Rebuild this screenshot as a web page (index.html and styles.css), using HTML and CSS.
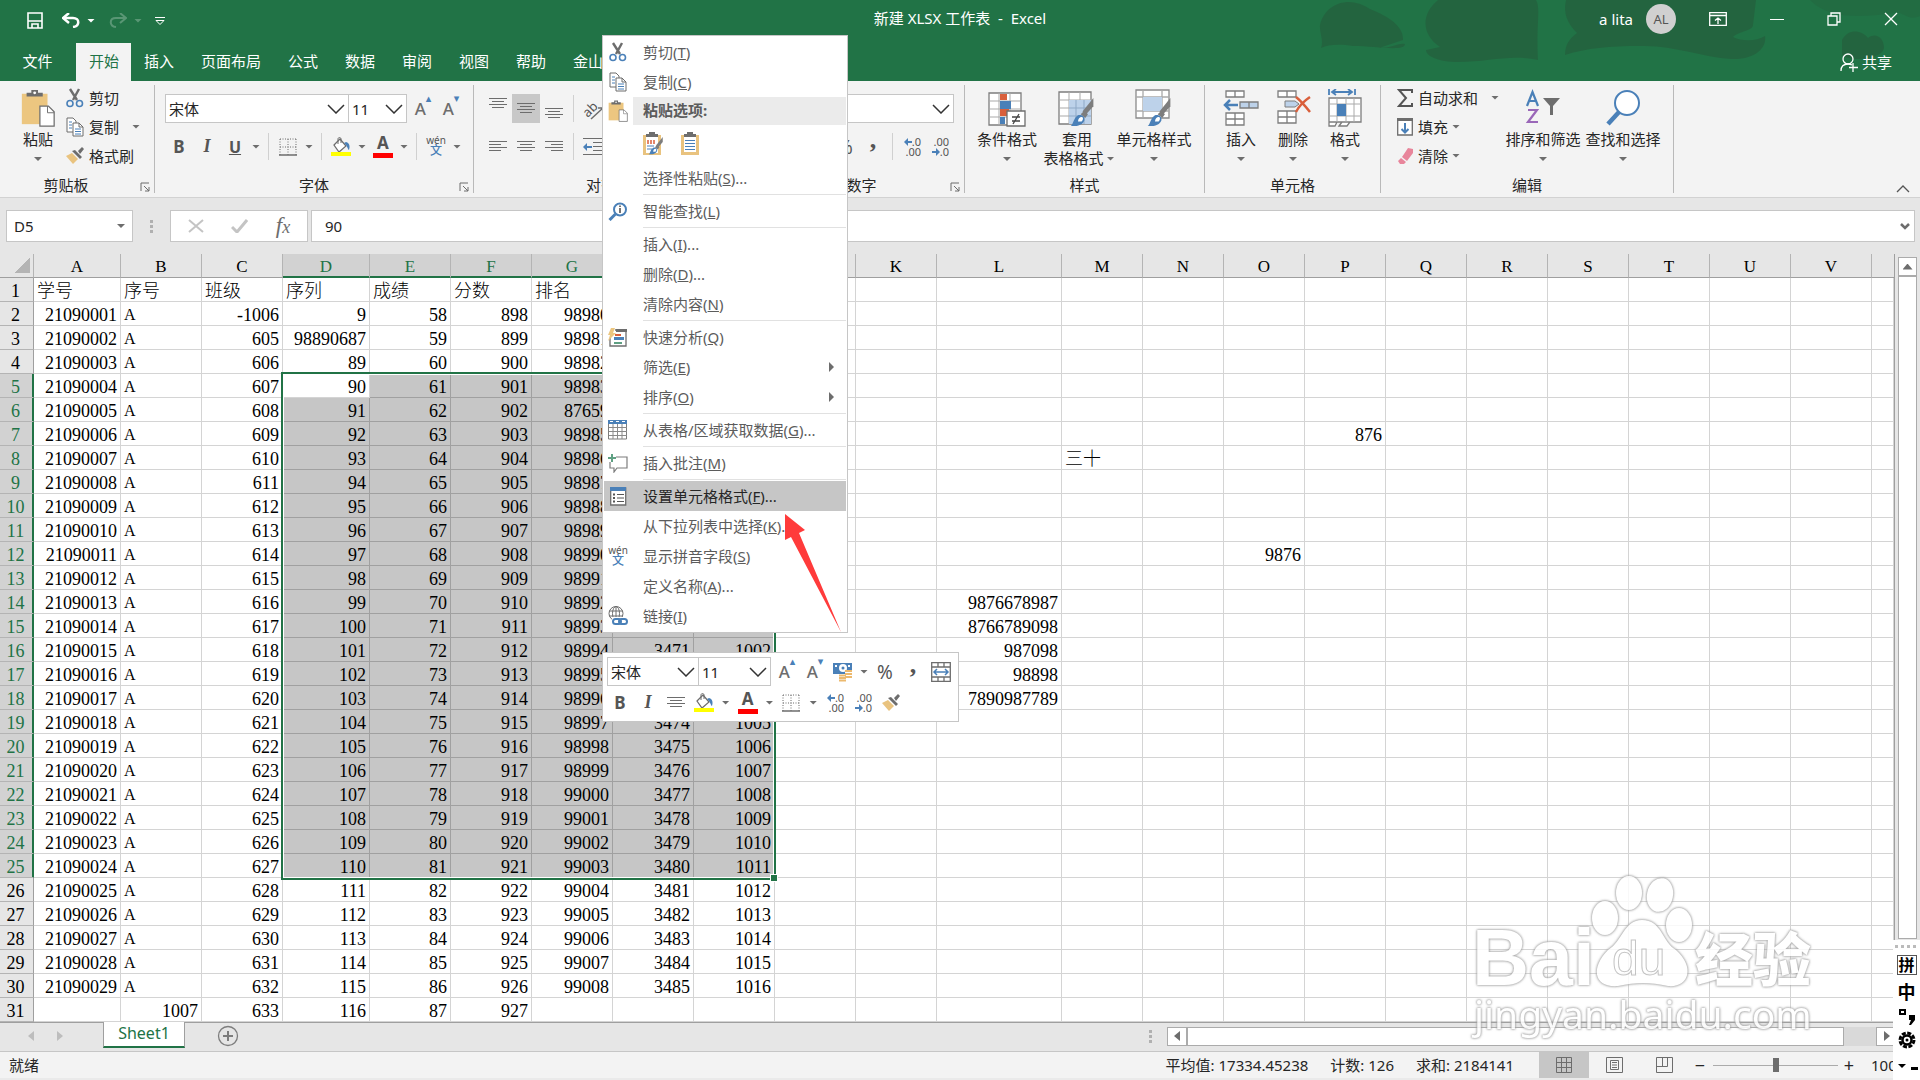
FILE: index.html
```html
<!DOCTYPE html>
<html lang="zh-CN">
<head>
<meta charset="utf-8">
<title>新建 XLSX 工作表 - Excel</title>
<link rel="stylesheet" href="styles.css">
</head>
<body>
<svg class="defs" aria-hidden="true">
  <symbol id="cut" viewBox="0 0 18 20"><path d="M4 1l7 11M13 1L7 12" stroke="#6d6d6d" stroke-width="2.4" fill="none"/><circle cx="4" cy="15.500" r="3" fill="none" stroke="#4a80b8" stroke-width="1.600"/><circle cx="13.500" cy="15.500" r="3" fill="none" stroke="#4a80b8" stroke-width="1.600"/></symbol>
  <symbol id="copy" viewBox="0 0 18 20"><path d="M1 1h6l3 3v11H1z" fill="#fff" stroke="#6d6d6d"/><path d="M7 6h6l4 4v9H7z" fill="#fff" stroke="#6d6d6d"/><path d="M13 6v4h4" fill="none" stroke="#6d6d6d"/><path d="M3 5h3M3 8h3M3 11h3M9 12h6M9 14.500h6M9 17h6" stroke="#4a80b8"/></symbol>
  <symbol id="brush" viewBox="0 0 18 18"><path d="M0 9l6-3 6 6-5 5z" fill="#e9c37f"/><path d="M6 4l3-1 7 7-2 2zM12 4l4-4 2 2-4 5z" fill="#6d6d6d"/></symbol>
  <symbol id="paste" viewBox="0 0 36 40"><rect x="1" y="5" width="27" height="32" fill="#ecc680"/><path d="M6 8V4h5V1h7v3h5v4z" fill="#6d6d6d"/><circle cx="14.500" cy="4" r="1.500" fill="#fff"/><path d="M20 18h9l6 6v15H20z" fill="#fff" stroke="#6d6d6d" stroke-width="1.300"/><path d="M28 18v7h7" fill="none" stroke="#6d6d6d"/></symbol>
  <symbol id="fill" viewBox="0 0 20 19"><path d="M3 8l6-6 6 7-7 6z" fill="#fff" stroke="#6d6d6d" stroke-width="1.200"/><path d="M7 7V2c0-2 3-2 3 0v4" fill="none" stroke="#6d6d6d"/><path d="M15 5c4 1 4 5 3 8-1 0-2-5-5-7z" fill="#4a80b8"/><path d="M0 15h20v4H0z" fill="#ff0"/></symbol>
  <symbol id="borders" viewBox="0 0 18 18"><path d="M1 1h16M1 9h16M1 1v16M9 1v16M17 1v16" fill="none" stroke="#6d6d6d" stroke-dasharray="1 1.500"/><path d="M0 17h18" stroke="#6d6d6d" stroke-width="1.500"/></symbol>
  <symbol id="lines-c" viewBox="0 0 18 12"><path d="M0 .5h18M3 3.500h12M0 6.500h18M3 9.500h12" stroke="#6d6d6d"/></symbol>
  <symbol id="lines-l" viewBox="0 0 18 12"><path d="M0 .5h18M0 3.500h12M0 6.500h18M0 9.500h12" stroke="#6d6d6d"/></symbol>
  <symbol id="lines-r" viewBox="0 0 18 12"><path d="M0 .5h18M6 3.500h12M0 6.500h18M6 9.500h12" stroke="#6d6d6d"/></symbol>
  <symbol id="indent" viewBox="0 0 20 18"><path d="M0 .5h20M10 4.500h10M10 8.500h10M10 12.500h10M0 16.500h20" stroke="#6d6d6d"/><path d="M0 9l4-4v3h5v2H4v3z" fill="#4a80b8"/></symbol>
  <symbol id="chev" viewBox="0 0 18 10"><path d="M1 1l8 8 8-8" fill="none" stroke="#333" stroke-width="1.500"/></symbol>
  <symbol id="launch" viewBox="0 0 10 10"><path d="M1 9V1h8M4 4l5 5M9 5v4H5" fill="none" stroke="#6d6d6d"/></symbol>
  <symbol id="grid" viewBox="0 0 36 36"><path d="M1 1h32v32H1z" fill="#fff" stroke="#7d7d7d" stroke-width="1.300"/><path d="M1 9h32M1 17h32M1 25h32M11 1v32M22 1v32" stroke="#a9a9a9"/></symbol>
  <symbol id="bigbrush" viewBox="0 0 26 32"><path d="M25 0v9l-8 9-4-3z" fill="#7d7d7d"/><path d="M15 14l4 4-3 4-5-4z" fill="#7d7d7d"/><path d="M0 31c3-2 3-9 8-12 5-1 8 2 7 6-3 6-9 6-15 6z" fill="#4a80b8"/><path d="M8 26c0-3 2-5 4-5s2 3 0 5z" fill="#fff"/></symbol>
  <symbol id="left-arrow" viewBox="0 0 8 8"><path d="M0 4l4-4v3h4v2H4v3z" fill="#4a80b8"/></symbol>
  <symbol id="right-arrow" viewBox="0 0 8 8"><path d="M8 4L4 0v3H0v2h4v3z" fill="#4a80b8"/></symbol>
</svg>

<div class="app">
  <header class="head">
    <svg class="art" viewBox="0 0 720 81" aria-hidden="true"><g fill="#24613e" opacity=".8"><path d="M120 25c5-22 30-30 50-16 20 8 34 18 33 31l-24 8c10 1 20-6 26-4 0 8-30 2-52 2-12-2-24-2-32 2 3-8-2-16-1-23z"/><path d="M238 0h98c5 8 0 24 2 60-28-6-48 2-80 2-20 0-32-6-32-12l14-3c-18-12-20-32-2-47z"/><path d="M366 0h190l-3 25c0 6-14 6-20 12 10 5 24 4 32-1 2 12-10 24-34 23-30-2-58-14-90-13-32 0-54 2-76 9 0-10 4-16 12-22-10-10-14-20-11-33z"/><path d="M642 40c6-12 20-10 26-2 8-6 16 0 16 10-2 12-34 14-42 7z"/><path d="M610 0h110v16c-12 6-18-6-26-3-40 6-68 4-84-13z" opacity=".5"/></g></svg>
    <div class="title-row">
      <div class="quick">
        <button aria-label="保存"><svg width="16" height="17" viewBox="0 0 16 17"><path d="M1 1h14v15H1z" fill="none" stroke="#fff" stroke-width="1.600"/><path d="M1 9h14M5 16v-4h6v4" fill="none" stroke="#fff" stroke-width="1.600"/></svg></button>
        <button aria-label="撤消"><svg width="18" height="15" viewBox="0 0 18 15"><path d="M2 5h9c7 0 7 8 0 9" fill="none" stroke="#fff" stroke-width="2.500"/><path d="M7 0L1 5l6 5" fill="none" stroke="#fff" stroke-width="2.500"/></svg><i class="caret light"></i></button>
        <button class="dim" aria-label="恢复"><svg width="18" height="15" viewBox="0 0 18 15"><path d="M16 5H7c-7 0-7 8 0 9" fill="none" stroke="#fff" stroke-width="2"/><path d="M11 0l6 5-6 5" fill="none" stroke="#fff" stroke-width="2"/></svg><i class="caret light"></i></button>
        <button aria-label="自定义快速访问工具栏"><svg width="10" height="8" viewBox="0 0 10 8"><path d="M0 .5h10M1 3.500l4 4 4-4z" fill="none" stroke="#fff"/></svg></button>
      </div>
      <div class="doc">新建 XLSX 工作表&nbsp; -&nbsp; Excel</div>
      <div class="account"><span>a lita</span><span class="avatar">AL</span>
        <button aria-label="功能区显示选项"><svg width="18" height="14" viewBox="0 0 18 14"><path d="M.7.7h16.600v12.600H.7zM1 3.500h16M9 12V6M6 8.500L9 6l3 2.500" fill="none" stroke="#fff" stroke-width="1.300"/></svg></button>
        <button aria-label="最小化"><svg width="14" height="14" viewBox="0 0 14 14"><path d="M0 7.500h14" stroke="#fff"/></svg></button>
        <button aria-label="还原"><svg width="14" height="14" viewBox="0 0 14 14"><path d="M1 4h9v9H1zM4 4V1h9v9h-3" fill="none" stroke="#fff" stroke-width="1.300"/></svg></button>
        <button aria-label="关闭"><svg width="14" height="14" viewBox="0 0 14 14"><path d="M1 1l12 12M13 1L1 13" stroke="#fff" stroke-width="1.300"/></svg></button>
      </div>
    </div>
    <nav class="tabs">
      <button class="file">文件</button><button class="on">开始</button><button>插入</button><button>页面布局</button><button>公式</button><button>数据</button><button>审阅</button><button>视图</button><button>帮助</button><button>金山</button>
      <button class="share"><svg width="18" height="19" viewBox="0 0 18 19"><circle cx="8" cy="6" r="5" fill="none" stroke="#fff" stroke-width="1.300"/><path d="M1 18c0-5 3-7 7-7 2 0 3 .5 4 1M13 10v9M9 14.500h9" fill="none" stroke="#fff" stroke-width="1.300"/></svg>共享</button>
    </nav>
  </header>

  <section class="ribbon">
    <div class="group clip">
      <div class="body">
        <button class="big"><svg width="36" height="40"><use href="#paste"/></svg>粘贴<i class="caret"></i></button>
        <div class="stack">
          <button><svg width="18" height="20"><use href="#cut"/></svg>剪切</button>
          <button><svg width="18" height="20"><use href="#copy"/></svg>复制<i class="caret far"></i></button>
          <button><svg width="18" height="18"><use href="#brush"/></svg>格式刷</button>
        </div>
      </div>
      <div class="foot">剪贴板<svg class="launch"><use href="#launch"/></svg></div>
    </div>
    <div class="group font">
      <div class="body rows">
        <div class="bar">
          <div class="combo name"><input aria-label="字体" value="宋体"><button aria-label="选择字体"><svg width="18" height="10"><use href="#chev"/></svg></button></div>
          <div class="combo size"><input aria-label="字号" value="11"><button aria-label="选择字号"><svg width="18" height="10"><use href="#chev"/></svg></button></div>
          <button class="tb grow-a">A<sup>▴</sup></button><button class="tb grow-a">A<sup>▾</sup></button>
        </div>
        <div class="bar">
          <button class="tb bold">B</button><button class="tb ital">I</button><button class="tb und">U</button><i class="caret"></i><i class="sep"></i>
          <button class="tb" aria-label="边框"><svg width="18" height="18"><use href="#borders"/></svg></button><i class="caret"></i><i class="sep"></i>
          <button class="tb" aria-label="填充颜色"><svg width="20" height="19"><use href="#fill"/></svg></button><i class="caret"></i>
          <button class="tb fcolor">A</button><i class="caret"></i><i class="sep"></i>
          <button class="tb wen"><span>wén</span><b>文</b></button><i class="caret"></i>
        </div>
      </div>
      <div class="foot">字体<svg class="launch"><use href="#launch"/></svg></div>
    </div>
    <div class="group align">
      <div class="body rows">
        <div class="bar"><button class="tb up" aria-label="顶端对齐"><svg width="18" height="12"><use href="#lines-c"/></svg></button><button class="tb sel" aria-label="垂直居中"><svg width="18" height="12"><use href="#lines-c"/></svg></button><button class="tb low" aria-label="底端对齐"><svg width="18" height="12"><use href="#lines-c"/></svg></button><i class="sep"></i><button class="tb orient" aria-label="方向"><span>ab</span><svg width="14" height="14" viewBox="0 0 14 14"><path d="M1 13L13 2M8 2h5v5" fill="none" stroke="#6d6d6d" stroke-width="1.500"/></svg></button></div>
        <div class="bar"><button class="tb" aria-label="左对齐"><svg width="18" height="12"><use href="#lines-l"/></svg></button><button class="tb" aria-label="居中"><svg width="18" height="12"><use href="#lines-c"/></svg></button><button class="tb" aria-label="右对齐"><svg width="18" height="12"><use href="#lines-r"/></svg></button><i class="sep"></i><button class="tb" aria-label="减少缩进量"><svg width="20" height="18"><use href="#indent"/></svg></button></div>
      </div>
      <div class="foot">对齐方式</div>
    </div>
    <div class="group number">
      <div class="body rows">
        <div class="combo"><input aria-label="数字格式" value="常规"><button aria-label="选择数字格式"><svg width="18" height="10"><use href="#chev"/></svg></button></div>
        <div class="bar"><button class="tb pct">%</button><button class="tb comma">,</button><i class="sep"></i><button class="tb dec"><span><svg width="8" height="8"><use href="#left-arrow"/></svg>.0</span><span>.00</span></button><button class="tb dec"><span>.00</span><span><svg width="8" height="8"><use href="#right-arrow"/></svg>.0</span></button></div>
      </div>
      <div class="foot">数字<svg class="launch"><use href="#launch"/></svg></div>
    </div>
    <div class="group styles">
      <div class="body">
        <button class="big"><svg width="38" height="38" viewBox="0 0 38 38"><svg y="3" width="36" height="36"><use href="#grid"/></svg><path d="M12 5h7v6h-7zM12 20h9v7h-9z" fill="#d95f3b"/><path d="M12 12h11v8H12zM12 28h5v7h-5z" fill="#4a80b8"/><path d="M19 22h18v15H19z" fill="#fff" stroke="#6d6d6d" stroke-width="1.300"/><path d="M24 28h8M24 32h8M31 25l-6 10" stroke="#444" stroke-width="1.300"/></svg>条件格式<i class="caret"></i></button>
        <button class="big"><svg width="38" height="38" viewBox="0 0 38 38"><svg y="2" width="36" height="36"><use href="#grid"/></svg><path d="M11 11h22v24H11z" fill="#bdd2ea"/><path d="M11 19h22M11 27h22M18 11v24M26 11v24" stroke="#8fa9c6"/><svg x="11" y="9" width="27" height="29"><use href="#bigbrush"/></svg></svg>套用<span class="two">表格格式<i class="caret"></i></span></button>
        <button class="big"><svg width="38" height="38" viewBox="0 0 38 38"><g fill="#fff" stroke="#8a8a8a" stroke-width="1.300"><path d="M1 1h33v28H1z"/><path d="M1 8h33M1 22h33M8 1v28M27 1v28" stroke="#aaa"/></g><path d="M8 8h19v14H8z" fill="#bdd2ea"/><svg x="11" y="9" width="27" height="29"><use href="#bigbrush"/></svg></svg>单元格样式<i class="caret"></i></button>
      </div>
      <div class="foot">样式</div>
    </div>
    <div class="group cells">
      <div class="body">
        <button class="big"><svg width="38" height="38" viewBox="0 0 38 38"><path d="M4 2h18v6H4zM13 2v6M4 24h18v12H4zM4 30h18M13 24v12" fill="#fff" stroke="#7d7d7d" stroke-width="1.300"/><path d="M18 13h18v6H18zM27 13v6" fill="#bdd2ea" stroke="#7d7d7d" stroke-width="1.300"/><path d="M16 16H3M8 11l-5 5 5 5" fill="none" stroke="#4a80b8" stroke-width="2.500"/></svg>插入<i class="caret"></i></button>
        <button class="big"><svg width="38" height="38" viewBox="0 0 38 38"><path d="M4 2h18v6H4zM13 2v6M4 22h18v12H4zM4 28h18M13 22v12" fill="#fff" stroke="#7d7d7d" stroke-width="1.300"/><path d="M11 12h10l4 3-4 3H11z" fill="#bdd2ea" stroke="#7d7d7d"/><path d="M22 8c5 4 10 10 14 15M36 8C30 12 25 17 22 23" fill="none" stroke="#d95f3b" stroke-width="2.500"/></svg>删除<i class="caret"></i></button>
        <button class="big"><svg width="38" height="38" viewBox="0 0 38 38"><path d="M3 9h32v24H3zM3 33h8l-2 4H3zM13 37l3-4h8l-3 4z" fill="#fff" stroke="#7d7d7d" stroke-width="1.300"/><path d="M3 15h32M3 27h32M11 9v24M20 9v24M28 9v24" stroke="#aaa"/><path d="M11 15h9v12h-9z" fill="#4a80b8"/><path d="M3 0v6M29 0v6M6 3h20M10 0L6 3l4 3M22 0l4 3-4 3" fill="none" stroke="#4a80b8" stroke-width="1.800"/></svg>格式<i class="caret"></i></button>
      </div>
      <div class="foot">单元格</div>
    </div>
    <div class="group edit">
      <div class="body">
        <div class="stack">
          <button><svg width="16" height="18" viewBox="0 0 16 18"><path d="M15 4V1H2l7 8-7 8h13v-3" fill="none" stroke="#555" stroke-width="2"/></svg>自动求和<i class="caret"></i></button>
          <button><svg width="16" height="18" viewBox="0 0 16 18"><path d="M.7 1h14.600v16H.7z" fill="#fff" stroke="#6d6d6d" stroke-width="1.300"/><path d="M0 0h16v3H0z" fill="#6d6d6d"/><path d="M8 5v10M4.500 11L8 14.500l3.500-3.500" fill="none" stroke="#4a80b8" stroke-width="2"/></svg>填充<i class="caret near"></i></button>
          <button><svg width="16" height="16" viewBox="0 0 16 16"><path d="M11 0l5 1v4l-6 8-5-4z M4 10l5 4-2 2-4 0-2-3z" fill="#e8859b"/></svg>清除<i class="caret near"></i></button>
        </div>
        <button class="big"><svg width="36" height="38" viewBox="0 0 36 38"><path d="M2 17L7.500 3 13 17M4 12h7" fill="none" stroke="#4a80b8" stroke-width="2.200"/><path d="M3 21h9L3 33h10" fill="none" stroke="#9a67b8" stroke-width="2.200"/><path d="M18 9h17l-7 8v9h-3v-9z" fill="#6d6d6d"/></svg>排序和筛选<i class="caret"></i></button>
        <button class="big"><svg width="36" height="38" viewBox="0 0 36 38"><circle cx="22" cy="14" r="12" fill="#fff" stroke="#4a80b8" stroke-width="2"/><path d="M14 23L3 35" stroke="#4a80b8" stroke-width="4.500"/></svg>查找和选择<i class="caret"></i></button>
      </div>
      <div class="foot">编辑</div>
    </div>
    <button class="collapse" aria-label="折叠功能区"><svg width="14" height="8" viewBox="0 0 14 8"><path d="M1 7l6-6 6 6" fill="none" stroke="#555" stroke-width="1.300"/></svg></button>
  </section>

  <section class="formula">
    <div class="namebox"><input aria-label="名称框" value="D5"><i class="caret"></i></div>
    <i class="dots"></i>
    <div class="fx"><button aria-label="取消"><svg width="16" height="14" viewBox="0 0 16 14"><path d="M1 1l14 12M15 1L1 13" stroke="#c4c4c4" stroke-width="2"/></svg></button><button aria-label="输入"><svg width="17" height="14" viewBox="0 0 17 14"><path d="M1 8l5 5L16 1" fill="none" stroke="#c4c4c4" stroke-width="3"/></svg></button><button class="fn" aria-label="插入函数">f<small>x</small></button></div>
    <div class="finput"><input aria-label="编辑栏" value="90"><svg width="10" height="7" viewBox="0 0 10 7"><path d="M1 1l4 4 4-4" fill="none" stroke="#6d6d6d" stroke-width="2.500"/></svg></div>
  </section>

  <main class="work">
    <div class="sheet">
      <table><colgroup id="cols"></colgroup><thead id="heads"></thead><tbody id="cells"></tbody></table>
      <i class="selection"></i>
    </div>
    <div class="vscroll"><button aria-label="向上滚动"><i class="tri up"></i></button><i class="thumb"></i></div>
  </main>

  <div class="sheets">
    <i class="tri left pale"></i><i class="tri right pale"></i>
    <button class="tab">Sheet1</button>
    <button class="add" aria-label="新工作表"><svg width="22" height="22" viewBox="0 0 22 22"><circle cx="11" cy="11" r="9.500" fill="none" stroke="#7d7d7d" stroke-width="1.300"/><path d="M11 6v10M6 11h10" stroke="#7d7d7d" stroke-width="2"/></svg></button>
    <i class="dots"></i>
    <div class="hscroll"><button aria-label="向左滚动"><i class="tri left"></i></button><i class="thumb"></i><button class="end" aria-label="向右滚动"><i class="tri right"></i></button></div>
  </div>

  <footer class="status">
    <span class="ready">就绪</span>
    <span>平均值: 17334.45238</span><span>计数: 126</span><span class="sum">求和: 2184141</span>
    <button class="view on" aria-label="普通"><svg width="16" height="16" viewBox="0 0 16 16"><path d="M.5.500h15v15H.5zM.5 5.500h15M.5 10.500h15M5.500.500v15M10.500.500v15" fill="none" stroke="#6d6d6d"/></svg></button>
    <button class="view" aria-label="页面布局"><svg width="17" height="16" viewBox="0 0 17 16"><path d="M.5.500h16v15H.5zM4.500 3.500h8v9h-8zM6 5.500h5M6 8h5M6 10.500h5" fill="none" stroke="#6d6d6d"/></svg></button>
    <button class="view" aria-label="分页预览"><svg width="17" height="16" viewBox="0 0 17 16"><path d="M.5.500h16v15H.5zM6.500.500v9M11.500.500v9M.5 9.500h11" fill="none" stroke="#6d6d6d"/></svg></button>
    <button class="zoom" aria-label="缩小">−</button><input type="range" aria-label="显示比例" min="0" max="100" value="50"><button class="zoom" aria-label="放大">+</button>
    <span class="pc">100%</span>
  </footer>
</div>

<svg class="mark" width="360" height="180" viewBox="0 0 360 180" aria-hidden="true">
  <g class="glow"><text x="4" y="113" class="bai">Bai</text><text x="227" y="109" class="jy">经验</text><text x="6" y="157" class="url">jingyan.baidu.com</text>
  <ellipse cx="137" cy="46" rx="13" ry="17"/><ellipse cx="161" cy="21" rx="13" ry="17"/><ellipse cx="192" cy="23" rx="13" ry="17" transform="rotate(12 192 23)"/><ellipse cx="211" cy="53" rx="13" ry="17"/>
  <path d="M174 48c20 0 20 22 34 30 20 18 12 38-8 36-18-4-32-4-50 0-24 2-28-18-10-36 14-8 16-30 34-30z"/><text x="144" y="103" class="du">du</text></g>
</svg>

<aside class="ime"><i class="grip"></i><button class="pin">拼</button><button>中</button><button class="punct" aria-label="中文标点"><svg width="18" height="18" viewBox="0 0 18 18"><path d="M2 3h5v4H2z" fill="none" stroke="#000" stroke-width="2"/><path d="M11 8h6v5l-4 5h-2l2-5h-2z"/></svg></button><button aria-label="设置"><svg width="18" height="18" viewBox="0 0 18 18"><circle cx="9" cy="9" r="7" fill="none" stroke="#000" stroke-width="3" stroke-dasharray="4 1.500"/><circle cx="9" cy="9" r="4.500" fill="none" stroke="#000" stroke-width="2.500"/><circle cx="9" cy="9" r="1.500"/></svg></button><div class="imeb"><i class="caret"></i><span></span></div></aside>

<div class="menu" role="menu">
  <button><svg width="18" height="20"><use href="#cut"/></svg>剪切(<u>T</u>)</button>
  <button><svg width="18" height="20"><use href="#copy"/></svg>复制(<u>C</u>)</button>
  <div class="cap"><svg width="20" height="22"><use href="#paste"/></svg><b>粘贴选项:</b></div>
  <div class="opts">
    <button aria-label="保留源格式"><svg width="22" height="24" viewBox="0 0 22 24"><path d="M0 3h18v20H0z" fill="#e9c37f"/><path d="M3 5h12v16H3z" fill="#fff"/><path d="M3 5V2h3V0h6v2h3v3z" fill="#6d6d6d"/><path d="M4 9h9M4 11h9" stroke="#d95f3b" stroke-width="1.500" stroke-dasharray="2 1"/><path d="M4 14h7M4 17h5" stroke="#4a80b8"/><svg x="4" y="5" width="18" height="18"><use href="#bigbrush"/></svg></svg></button>
    <button aria-label="粘贴"><svg width="18" height="24" viewBox="0 0 18 24"><path d="M0 3h18v20H0z" fill="#e9c37f"/><path d="M3 5h12v15H3z" fill="#fff"/><path d="M3 5V2h3V0h6v2h3v3z" fill="#6d6d6d"/><path d="M4 8.500h10M4 11.500h10M4 14.500h10M4 17.500h10" stroke="#4a80b8"/></svg></button>
  </div>
  <button>选择性粘贴(<u>S</u>)...</button><hr>
  <button><svg width="19" height="19" viewBox="0 0 19 19"><circle cx="11.500" cy="7.500" r="6" fill="#fff" stroke="#4a80b8" stroke-width="2"/><path d="M7 12l-6 6" stroke="#4a80b8" stroke-width="3"/><path d="M11.500 6v5M11.500 3.500v1.500" stroke="#444" stroke-width="1.500"/></svg>智能查找(<u>L</u>)</button><hr>
  <button>插入(<u>I</u>)...</button><button>删除(<u>D</u>)...</button><button>清除内容(<u>N</u>)</button><hr>
  <button><svg width="20" height="19" viewBox="0 0 20 19"><path d="M2 10v8h16V2H7" fill="#fff" stroke="#6d6d6d" stroke-width="1.300"/><path d="M8 1h11v3H8z" fill="#6d6d6d"/><path d="M3 0h4L5 5h3L0 13l2-6H0z" fill="#ecc680"/><path d="M7 6h6v2H7z" fill="#d95f3b"/><path d="M6 9h10v3H6z" fill="#4a80b8"/><path d="M6 14h8v2H6z" fill="#5fa083"/></svg>快速分析(<u>Q</u>)</button>
  <button>筛选(<u>E</u>)<i class="tri right"></i></button><button>排序(<u>O</u>)<i class="tri right"></i></button><hr>
  <button><svg width="20" height="20" viewBox="0 0 20 20"><path d="M.5 3h18v16H.5z" fill="#fff" stroke="#7d7d7d"/><path d="M1 7.500h18M1 11.500h18M1 15.500h18M5 4v15M9.500 4v15M14 4v15" stroke="#8a8a8a"/><path d="M0 0h19v4H0z" fill="#4a80b8"/><path d="M2 1.500h3M8 1.500h3M14 1.500h3" stroke="#fff"/></svg>从表格/区域获取数据(<u>G</u>)...</button><hr>
  <button><svg width="20" height="19" viewBox="0 0 20 19"><path d="M8 3h11v11H9l-3 4v-4H2V8" fill="#fff" stroke="#7d7d7d" stroke-width="1.200"/><path d="M4 0v8M0 4h8" stroke="#5fa083" stroke-width="2"/></svg>插入批注(<u>M</u>)</button><hr>
  <button class="hot"><svg width="18" height="19" viewBox="0 0 18 19"><path d="M1.700 1h15v17h-15z" fill="#fff" stroke="#6d6d6d" stroke-width="1.300"/><path d="M1 0h16v4H1z" fill="#4a80b8"/><path d="M8 7.500h7M8 11h7M8 14.500h7" stroke="#555"/><path d="M4 7.500h2M4 11h2M4 14.500h2" stroke="#555" stroke-width="2"/></svg>设置单元格格式(<u>F</u>)...</button>
  <button>从下拉列表中选择(<u>K</u>)...</button>
  <button><span class="wen"><span>wén</span><b>文</b></span>显示拼音字段(<u>S</u>)</button>
  <button>定义名称(<u>A</u>)...</button>
  <button><svg width="20" height="20" viewBox="0 0 20 20"><circle cx="8" cy="7.500" r="7" fill="#fff" stroke="#6d6d6d"/><path d="M1 5h14M1 10h14M8 .500v14" stroke="#6d6d6d"/><ellipse cx="8" cy="7.500" rx="3.500" ry="7" fill="none" stroke="#6d6d6d"/><path d="M4 11h16v9H4z" fill="#fff"/><rect x="5" y="13" width="8" height="5" rx="2.500" fill="none" stroke="#4a80b8" stroke-width="2"/><rect x="11" y="13" width="8" height="5" rx="2.500" fill="none" stroke="#4a80b8" stroke-width="2"/></svg>链接(<u>I</u>)</button>
</div>

<div class="mini">
  <div class="bar">
    <div class="combo name"><input aria-label="字体" value="宋体"><button aria-label="选择字体"><svg width="18" height="10"><use href="#chev"/></svg></button></div>
    <div class="combo size"><input aria-label="字号" value="11"><button aria-label="选择字号"><svg width="18" height="10"><use href="#chev"/></svg></button></div>
    <button class="tb grow-a">A<sup>▴</sup></button><button class="tb grow-a">A<sup>▾</sup></button>
    <button class="tb" aria-label="会计数字格式"><svg width="20" height="20" viewBox="0 0 20 20"><path d="M0 1h19v11H0z" fill="#4a80b8"/><circle cx="10" cy="6" r="4" fill="#fff"/><circle cx="10" cy="6" r="1.500" fill="#4a80b8"/><path d="M2 3h2v2H2zM15 3h2v2h-2z" fill="#fff"/><path d="M12 8h7v9h-7zM6 13h7v6H6z" fill="#fff"/><path d="M12 9h7M12 12h7M12 15h7M6 13.500h7M6 16h7M6 18.500h7" stroke="#ecb96e" stroke-width="1.800"/></svg></button><i class="caret"></i>
    <button class="tb pct">%</button><button class="tb comma">,</button>
    <button class="tb" aria-label="合并后居中"><svg width="20" height="20" viewBox="0 0 20 20"><path d="M.7.700h18.600v18.600H.7zM.7 5h18.600M.7 15h18.600M7 .700V5M13 .700V5M7 15v4M13 15v4" fill="#fff" stroke="#6d6d6d" stroke-width="1.300"/><path d="M3 10h14M6 7l-3 3 3 3M14 7l3 3-3 3" fill="none" stroke="#4a80b8" stroke-width="1.500"/></svg></button>
  </div>
  <div class="bar">
    <button class="tb bold">B</button><button class="tb ital">I</button><button class="tb" aria-label="居中"><svg width="18" height="12"><use href="#lines-c"/></svg></button>
    <button class="tb" aria-label="填充颜色"><svg width="20" height="19"><use href="#fill"/></svg></button><i class="caret"></i>
    <button class="tb fcolor">A</button><i class="caret"></i>
    <button class="tb" aria-label="边框"><svg width="18" height="18"><use href="#borders"/></svg></button><i class="caret"></i>
    <button class="tb dec"><span><svg width="8" height="8"><use href="#left-arrow"/></svg>.0</span><span>.00</span></button><button class="tb dec"><span>.00</span><span><svg width="8" height="8"><use href="#right-arrow"/></svg>.0</span></button>
    <button class="tb" aria-label="格式刷"><svg width="18" height="18"><use href="#brush"/></svg></button>
  </div>
</div>

<svg class="pointer" width="60" height="120" viewBox="0 0 60 120" aria-hidden="true"><path d="M0 0l20 16-6 3 42 99L6 23l-6 3z" fill="#ff3b3b"/></svg>
<script src="sheet.js"></script>
</body>
</html>
```
FILE: styles.css
```css
* { box-sizing: border-box; }
body { margin: 0; overflow: hidden; font: 15px/20px "Noto Sans", "Noto Sans CJK SC", sans-serif; color: #262626; }
button, input { font: inherit; color: inherit; border: 0; background: none; padding: 0; margin: 0; min-width: 0; }
button { white-space: nowrap; }
svg { flex: none; display: block; }
i { display: block; flex: none; }
.defs { position: absolute; width: 0; height: 0; }
.app { min-height: 100vh; display: flex; flex-direction: column; background: #e6e6e6; }
.caret { width: 14px; height: 4px; background: #6d6d6d; clip-path: polygon(3px 0, 11px 0, 7px 4px); }
.caret.light { background: #fff; width: 8px; clip-path: polygon(0 0, 8px 0, 4px 4px); }

.head { position: relative; height: 81px; background: #217346; color: #fff; }
.art { position: absolute; right: 0; top: 0; width: 720px; height: 81px; }
.title-row { position: relative; height: 43px; display: grid; grid-template-columns: 1fr auto 1fr; align-items: start; }
.quick { display: flex; align-items: center; gap: 14px; padding: 12px 0 0 27px; height: 29px; }
.quick button { display: flex; align-items: center; gap: 7px; }
.quick button:nth-child(2) { margin-left: 5px; }
.quick button:nth-child(4) { margin-left: -1px; }
.dim { opacity: .25; }
.doc { padding-top: 8px; }
.account { display: flex; align-items: center; justify-content: flex-end; padding: 4px 22px 0 0; height: 34px; }
.avatar { width: 30px; height: 30px; border-radius: 50%; background: #d0d0d0; color: #555; font-size: 13px; line-height: 30px; text-align: center; margin-left: 13px; }
.account button { margin-left: 43px; }
.account .avatar + button { margin-left: 33px; }
.tabs { position: relative; display: flex; height: 38px; }
.tabs button { padding: 0 14px 3px 13px; }
.tabs .file { width: 76px; }
.tabs .on { background: #f3f3f3; color: #217346; width: 55px; }
.tabs .share { margin-left: auto; display: flex; align-items: center; gap: 4px; padding: 0 28px 0 0; }

.ribbon { display: flex; height: 117px; background: #f3f3f3; border-bottom: 1px solid #d2d2d2; padding-top: 4px; }
.group { display: flex; flex-direction: column; border-right: 1px solid #b9b9b9; height: 108px; }
.body { display: flex; height: 91px; }
.foot { height: 17px; line-height: 17px; text-align: center; position: relative; padding-top: 1px; }
.launch { position: absolute; right: 4px; bottom: 1px; width: 10px; height: 10px; }
.clip { width: 155px; }
.clip .foot { padding-right: 22px; }
.clip .big { padding-left: 16px; width: 60px; }
.font { width: 319px; } .align { width: 285px; } .number { width: 206px; } .styles { width: 240px; } .cells { width: 176px; } .edit { width: 293px; }
.big { display: flex; flex-direction: column; align-items: center; line-height: 19px; padding-top: 4px; }
.big > svg { margin-bottom: 3px; height: 38px; }
.big > .caret { margin-top: 8px; }
.two { display: flex; align-items: center; margin-left: 7px; }
.stack { display: flex; flex-direction: column; margin-left: 6px; margin-top: -2px; }
.stack button { height: 29px; display: flex; align-items: center; gap: 5px; }
.stack .far { margin-left: 5px; }
.edit .stack .caret { margin-left: 5px; } .edit .stack .near { margin-left: -4px; }
.edit .stack { margin-left: 16px; width: 106px; }
.edit .big { width: 80px; }
.styles .body { padding-left: 2px; } .styles .big { width: 80px; } .styles .big:nth-child(2) { width: 60px; } .styles .big:nth-child(3) { width: 94px; }
.cells .body { padding-left: 10px; } .cells .big { width: 52px; }
.rows { flex-direction: column; padding: 9px 10px 0; gap: 9px; }
.bar { display: flex; align-items: center; height: 29px; }
.combo { display: flex; flex: none; height: 29px; background: #fff; border: 1px solid #c6c6c6; padding: 0 3px; align-items: center; justify-content: space-between; }
.combo input { width: 60%; }
.combo.name { width: 184px; } .combo.size { width: 59px; margin-left: -1px; margin-right: 2px; }
.combo.size input { width: 22px; }
.font .rows { padding-right: 0; }
.tb { width: 28px; height: 29px; display: flex; align-items: center; justify-content: center; color: #555; flex: none; }
.sep { width: 1px; height: 27px; background: #d0d0d0; margin: 0 5px; }
.bold { font-weight: 700; font-size: 17px; }
.ital { font: italic 700 18px "Liberation Serif", serif; }
.und { font-weight: 700; text-decoration: underline; font-size: 16px; }
.grow-a { font-size: 17px; color: #6d6d6d; font-weight: 500; }
.grow-a sup { font: 11px/10px "DejaVu Sans", sans-serif; color: #4a80b8; align-self: flex-start; }
.fcolor { font-weight: 700; font-size: 17px; background: linear-gradient(#f00, #f00) center 21px / 20px 5px no-repeat; padding-bottom: 8px; }
.wen { width: 20px; display: flex; flex-direction: column; align-items: center; justify-content: center; font-size: 10px; line-height: 9px; color: #555; }
.wen b { font-weight: 500; font-size: 12px; line-height: 12px; color: #4a80b8; }
.tb.wen { width: 28px; }
.up { padding-bottom: 10px; } .low { padding-top: 10px; } .sel { background: #c8c8c8; }
.orient span { transform: rotate(-45deg); font-size: 13px; } .orient svg { margin: 8px 0 0 -8px; }
.pct { font-size: 19px; } .comma { font: 700 26px/20px "Liberation Serif", serif; padding-bottom: 14px; }
.dec { flex-direction: column; font-size: 11px; line-height: 9px; align-items: center; gap: 1px; }
.dec span { display: flex; justify-content: flex-end; width: 18px; align-items: center; }
.number .bar { justify-content: flex-end; }
.collapse { margin: auto 10px 4px auto; }

.formula { height: 56px; padding: 12px 5px 12px 6px; display: flex; align-items: center; }
.formula > div { background: #fff; border: 1px solid #c6c6c6; height: 32px; display: flex; align-items: center; }
.namebox { width: 127px; padding: 0 4px 0 7px; justify-content: space-between; }
.namebox input { width: 80px; }
.dots { width: 3px; height: 13px; margin: 0 17px; background: repeating-linear-gradient(#b0b0b0 0 3px, transparent 3px 5px); }
.fx { width: 138px; justify-content: space-around; padding: 0 3px; }
.fn { font: italic 23px/24px "Liberation Serif", serif; color: #6d6d6d; } .fn small { font-size: 18px; }
.finput { flex: 1; margin-left: 3px; padding: 0 4px 0 13px; }
.finput input { flex: 1; }

.work { display: flex; flex: 1; min-height: 0; }
.sheet { position: relative; flex: 1; background: #fff; border-right: 1px solid #9f9f9f; }
table { width: 100%; table-layout: fixed; border-collapse: separate; border-spacing: 0; font: 18px/20px "Liberation Serif", "Noto Sans CJK SC", serif; color: #000; }
tr { height: 24px; }
td, th { height: 24px; padding: 3px 3px 0; overflow: hidden; white-space: nowrap; font-weight: 400; border-right: 1px solid #d4d4d4; border-bottom: 1px solid #d4d4d4; text-align: right; line-height: 20px; }
th { background: #e6e6e6; text-align: center; border-color: #b4b4b4; }
thead th { border-bottom-color: #9f9f9f; font-size: 17px; }
tbody th { border-right-color: #9f9f9f; padding-right: 8px; padding-left: 6px; }
thead th:last-child { border-right: 0; }
thead th:first-child { background: linear-gradient(135deg, transparent 50%, #b4b4b4 50%) 15px 4px / 15px 15px no-repeat #e6e6e6; }
th.s { background: #d2d2d2; color: #217346; }
thead th.s { box-shadow: inset 0 -1px #217346; border-bottom-color: #217346; }
tbody th.s { box-shadow: inset -1px 0 #217346; border-right-color: #217346; }
td.l { text-align: left; font-weight: 300; }
td.letter { font-size: 16px; }
td.s { background: #c6c6c6; border-color: #a0a0a0; }
.selection { position: absolute; left: 281px; top: 118px; width: 495px; height: 508px; border: 2px solid #217346; box-shadow: inset 0 0 0 1px #fff; }
.selection::after { content: ""; position: absolute; right: -4px; bottom: -4px; width: 6px; height: 6px; background: #217346; border: 1px solid #fff; }
.tri { width: 6px; height: 10px; background: #6d6d6d; }
.tri.left { clip-path: polygon(6px 0, 6px 10px, 0 5px); }
.tri.right { clip-path: polygon(0 0, 0 10px, 6px 5px); }
.tri.up { width: 10px; height: 6px; clip-path: polygon(0 6px, 10px 6px, 5px 0); padding: 0; }
.pale { background: #bdbdbd; }
.vscroll { width: 25px; padding: 3px 3px 83px; display: flex; flex-direction: column; }
.vscroll button, .vscroll .thumb { width: 19px; background: #fff; border: 1px solid #ababab; }
.vscroll button { height: 19px; display: grid; place-items: center; flex: none; }
.vscroll .thumb { flex: 1; }

.sheets { height: 29px; border-top: 1px solid #9f9f9f; display: flex; align-items: center; padding: 0 0 2px 28px; }
.sheets > .tri + .tri { margin-left: 23px; }
.tab { width: 82px; height: 27px; margin: -3px 0 0 40px; padding-bottom: 2px; background: #fff; border: solid #9f9f9f; border-width: 0 1px; border-bottom: 2px solid #217346; color: #217346; font-size: 16px; }
.add { margin-left: 32px; }
.sheets .dots { margin-left: auto; margin-right: 15px; }
.hscroll { display: flex; width: 753px; height: 19px; background: #d9d9d9; }
.hscroll button, .hscroll .thumb { background: #fff; border: 1px solid #ababab; }
.hscroll button { width: 20px; display: grid; place-items: center; }
.hscroll .thumb { width: 657px; }
.hscroll .end { margin-left: auto; width: 44px; justify-content: start; padding-left: 7px; }

.status { height: 29px; border-top: 1px solid #c6c6c6; border-bottom: 2px solid #eaeaea; background: #f3f3f3; display: flex; align-items: center; padding-left: 9px; }
.ready { margin-right: auto; }
.status > span + span { margin-left: 22px; }
.status .sum { margin-right: 25px; }
.view { width: 50px; height: 26px; display: grid; place-items: center; }
.view.on { background: #c6c6c6; }
.zoom { width: 16px; font-size: 18px; margin: 0 0 0 3px; }
.status input { appearance: none; width: 125px; height: 14px; margin: 0 0 0 5px; background: linear-gradient(#ababab, #ababab) center / 100% 1px no-repeat; }
.status input::-webkit-slider-thumb { appearance: none; width: 6px; height: 14px; background: #6d6d6d; }
.status > span.pc { width: 49px; margin-left: 14px; }

.menu { position: absolute; left: 602px; top: 35px; width: 246px; background: #fff; border: 1px solid #c6c6c6; padding: 1px; color: #5c5c5c; }
.menu > button { display: flex; align-items: center; width: 100%; height: 30px; padding-left: 39px; }
.menu > button > svg, .menu > button > .wen { margin-left: -35px; margin-right: 15px; width: 20px; }
.menu .tri { margin-left: auto; margin-right: 12px; width: 5px; height: 10px; clip-path: polygon(0 0, 0 10px, 5px 5px); }
.menu .hot { background: #c6c6c6; color: #262626; }
.menu hr { margin: 0 0 0 39px; border: 0; height: 3px; background: linear-gradient(#e1e1e1, #e1e1e1) 0 1px / 100% 1px no-repeat; }
.cap { display: flex; align-items: center; height: 28px; padding-left: 4px; }
.cap b { margin-left: 5px; flex: 1; background: #ebebeb; padding-left: 10px; height: 28px; line-height: 26px; }
.opts { display: flex; gap: 16px; padding-left: 39px; height: 38px; align-items: center; }

.mini { position: absolute; left: 602px; top: 652px; width: 357px; height: 70px; background: #fff; border: 1px solid #c6c6c6; padding: 3px 4px; }
.mini .bar { height: 31px; }
.mini .name { width: 92px; } .mini .size { width: 73px; }
.mini .bar:last-child { justify-content: space-between; padding-right: 50px; }
.mini .bar:last-child .tb { width: 26px; }
.pointer { position: absolute; left: 785px; top: 514px; }

.mark { position: absolute; right: 92px; bottom: 28px; overflow: visible; opacity: .85; }
.glow { fill: #fff; filter: drop-shadow(0 0 1px #999) drop-shadow(0 0 1px #aaa); }
.bai { font: 700 79px "Liberation Sans", sans-serif; }
.jy { font: 900 58px "Noto Sans CJK SC", sans-serif; }
.url { font: 39px "Noto Sans", sans-serif; }
.du { font: 48px "Liberation Sans", sans-serif; stroke: #bbb; stroke-width: 1px; }

.ime { position: absolute; right: 0; bottom: 0; width: 27px; height: 140px; background: #fff; color: #000; display: flex; flex-direction: column; align-items: center; padding-top: 5px; gap: 4px; font-weight: 700; font-size: 18px; }
.ime button { height: 20px; line-height: 20px; display: flex; align-items: center; }
.ime .pin { border: 1px solid #555; width: 20px; height: 20px; line-height: 18px; font-size: 16px; justify-content: center; margin: 3px 0; }
.grip { width: 24px; height: 3px; background: repeating-linear-gradient(90deg, #bbb 0 3px, transparent 3px 6px); }
.imeb { display: flex; align-items: center; gap: 2px; margin-top: 8px; }
.imeb .caret { background: #000; } .imeb span { width: 7px; height: 3px; background: #000; margin-top: 5px; }
```
FILE: sheet.js
```javascript
const letters = 'ABCDEFGHIJKLMNOPQRSTUV'.split('');
const widths = { A: 87, D: 87, L: 125 };
const titles = ['学号', '序号', '班级', '序列', '成绩', '分数', '排名', '', ''];
const special = { B31: 1007, C2: -1006, D2: 9, D3: 98890687, G6: 87659, P7: 876, M8: '三十', O12: 9876,
  L14: 9876678987, L15: 8766789098, L16: 987098, L17: 98898, L18: 7890987789 };
const offset = { A: 21089999, C: 602, D: 85, E: 56, F: 896, G: 98978, H: 3455, I: 986 };
const selectedCol = c => c >= 'D' && c <= 'I';
const selectedRow = r => r >= 5 && r <= 25;

function value(c, r) {
  if (special[c + r] !== undefined) return special[c + r];
  if (r === 1) return titles[letters.indexOf(c)] || '';
  if (c === 'B') return r < 31 ? 'A' : '';
  if (r === 31 && 'AGHI'.includes(c)) return '';
  return offset[c] ? offset[c] + r : '';
}

document.getElementById('cols').innerHTML = '<col style="width:34px">' +
  letters.map(c => `<col style="width:${widths[c] || 81}px">`).join('') + '<col>';
document.getElementById('heads').innerHTML = '<tr><th></th>' +
  letters.map(c => `<th scope="col" class="${selectedCol(c) ? 's' : ''}">${c}</th>`).join('') + '<th></th></tr>';

let html = '';
for (let r = 1; r <= 31; r++) {
  html += `<tr><th scope="row" class="${selectedRow(r) ? 's' : ''}">${r}</th>`;
  for (const c of letters) {
    const v = value(c, r);
    const cls = [];
    if (typeof v === 'string') cls.push('l');
    if (v === 'A') cls.push('letter');
    if (selectedCol(c) && selectedRow(r) && c + r !== 'D5') cls.push('s');
    html += `<td class="${cls.join(' ')}">${v}</td>`;
  }
  html += '<td></td></tr>';
}
document.getElementById('cells').innerHTML = html;
```
